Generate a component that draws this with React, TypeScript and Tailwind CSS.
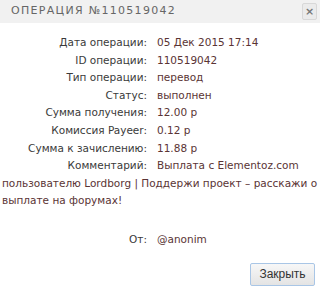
import React from 'react';

const rows: [string, string][] = [
  ['Дата операции:', '05 Дек 2015 17:14'],
  ['ID операции:', '110519042'],
  ['Тип операции:', 'перевод'],
  ['Статус:', 'выполнен'],
  ['Сумма получения:', '12.00 р'],
  ['Комиссия Payeer:', '0.12 р'],
  ['Сумма к зачислению:', '11.88 р'],
];

function Row({ label, value }: { label: string; value: string }) {
  return (
    <div>
      <span className="inline-block w-[145px] text-right mr-[10px] text-[#3a3a3a]">{label}</span>
      <span className="text-[#5a3434]">{value}</span>
    </div>
  );
}

export default function App() {
  return (
    <div className="w-[320px] h-[291px] bg-white overflow-hidden" style={{ fontFamily: '"DejaVu Sans", sans-serif' }}>
      <div className="h-[23px] bg-[#f1f1f1] flex items-center justify-between pl-[11px] pr-[3px]">
        <div className="text-[11px] tracking-[1.3px] text-[#666]">ОПЕРАЦИЯ №110519042</div>
        <button className="w-[15px] h-[17px] rounded-[2px] border border-[#d8d8d8] bg-[#ebebeb] flex items-center justify-center text-[#777] text-[11px] font-bold leading-none">
          ×
        </button>
      </div>
      <div className="pt-[11px] px-[2px] text-[10.5px] leading-[17.6px]">
        {rows.map(([l, v]) => (
          <Row key={l} label={l} value={v} />
        ))}
        <div>
          <span className="inline-block w-[145px] text-right mr-[10px] text-[#3a3a3a]">Комментарий:</span>
          <span className="text-[#5a3434]">
            Выплата с Elementoz.com пользователю Lordborg | Поддержи проект – расскажи о выплате на форумах!
          </span>
        </div>
        <div className="mt-[21px]">
          <span className="inline-block w-[145px] text-right mr-[10px] text-[#3a3a3a]">От:</span>
          <span className="text-[#5a3434]">@anonim</span>
        </div>
      </div>
      <div className="flex justify-end pr-[5px] mt-[14px]">
        <button
          className="w-[65px] h-[23px] border border-[#a9c6e6] rounded-[2px] bg-gradient-to-b from-[#f7f7f7] to-[#e4e4e4] text-[12px] text-[#333]"
          style={{ fontFamily: '"Liberation Sans", sans-serif' }}
        >
          Закрыть
        </button>
      </div>
    </div>
  );
}
